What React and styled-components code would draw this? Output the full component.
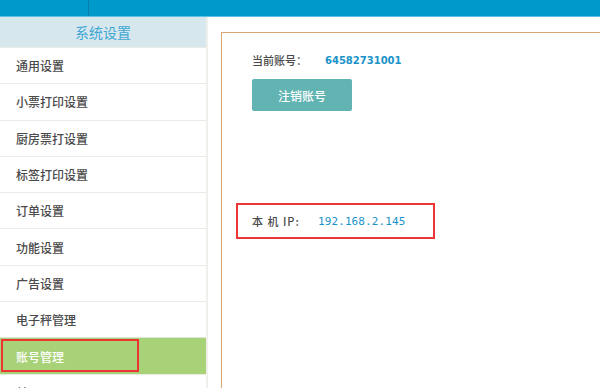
import React from 'react'
import styled, { createGlobalStyle } from 'styled-components';

const GlobalStyle = createGlobalStyle`
  html, body { margin: 0; padding: 0; background: #fff; }
  body { font-family: "Noto Sans CJK SC", "Noto Sans", sans-serif; overflow: hidden; }
`;

const menu = ["通用设置", "小票打印设置", "厨房票打设置", "标签打印设置", "订单设置", "功能设置", "广告设置", "电子秤管理", "账号管理", "关于"];

function App() {
    return (
        <Page>
            <GlobalStyle />
            <TopBar><TopDivider /></TopBar>
            <Body>
                <Sidebar>
                    <SideHeader>系统设置</SideHeader>
                    {menu.map((m) => (
                        <MenuItem key={m} $active={m === "账号管理"}>
                            {m}
                            {m === "账号管理" && <MarkBox $w={138} $h={33} $l={1} $t={1} />}
                        </MenuItem>
                    ))}
                </Sidebar>
                <Gutter />
                <Content>
                    <Panel>
                        <InfoRow>
                            <Label>当前账号：</Label>
                            <Value>64582731001</Value>
                        </InfoRow>
                        <LogoutButton>注销账号</LogoutButton>
                        <IpRow>
                            <Label $spaced>本 机 IP:</Label>
                            <IpValue>192.168.2.145</IpValue>
                            <MarkBox $w={199} $h={36} $l={-16} $t={-10} />
                        </IpRow>
                    </Panel>
                </Content>
            </Body>
        </Page>
    )
}

const Page = styled.div`
width: 600px;
height: 388px;
overflow: hidden;
display: flex;
flex-direction: column;
`;
const TopBar = styled.div`
height: 16px;
background: #0099cc;
border-bottom: 1px solid #5cc0e2;
position: relative;
flex-shrink: 0;
`;
const TopDivider = styled.div`
position: absolute;
left: 88px;
top: 0;
width: 1px;
height: 16px;
background: #0a7fae;
`;
const Body = styled.div`
display: flex;
flex: 1;
`;
const Sidebar = styled.div`
width: 206px;
flex-shrink: 0;
display: flex;
flex-direction: column;
`;
const SideHeader = styled.div`
height: 30px;
background: #d6e8ee;
color: #3fa6d3;
font-size: 14px;
display: flex;
align-items: center;
justify-content: center;
`;
const MenuItem = styled.div`
position: relative;
height: 35.3px;
flex-shrink: 0;
display: flex;
align-items: center;
padding-left: 16px;
font-size: 12px;
font-weight: 500;
border-top: 1px solid ${p => p.$active ? '#dfe7d4' : '#ebebe6'};
background: ${p => p.$active ? '#a8d278' : '#fff'};
color: ${p => p.$active ? '#fff' : '#4a4a4a'};
`;
const MarkBox = styled.div`
position: absolute;
left: ${p => p.$l}px;
top: ${p => p.$t}px;
width: ${p => p.$w}px;
height: ${p => p.$h}px;
box-sizing: border-box;
border: 2px solid #ee3535;
pointer-events: none;
`;
const Gutter = styled.div`
width: 2px;
background: #efefec;
flex-shrink: 0;
`;
const Content = styled.div`
flex: 1;
padding: 15px 0 0 13px;
`;
const Panel = styled.div`
height: 100%;
box-sizing: border-box;
border-top: 1.5px solid #d6a676;
border-left: 1.5px solid #d6a676;
padding: 19px 0 0 30px;
`;
const InfoRow = styled.div`
display: flex;
align-items: center;
height: 16px;
`;
const Label = styled.span`
font-size: 11px;
font-weight: 500;
color: #4a4a4a;
width: ${p => p.$spaced ? '66px' : '73px'};
letter-spacing: ${p => p.$spaced ? '1px' : '0'};
`;
const Value = styled.span`
font-family: "DejaVu Sans", sans-serif;
font-size: 10px;
font-weight: bold;
color: #1a93c8;
`;
const IpValue = styled.span`
font-family: "DejaVu Sans Mono", monospace;
font-size: 11px;
color: #1a93c8;
letter-spacing: 0.1px;
`;
const LogoutButton = styled.div`
margin-top: 11px;
width: 100px;
height: 32px;
background: #62b4b2;
border-radius: 2px;
color: #fff;
font-size: 12px;
font-weight: 500;
display: flex;
align-items: center;
justify-content: center;
`;
const IpRow = styled.div`
position: relative;
margin-top: 102px;
display: flex;
align-items: center;
height: 16px;
`;

export default App
